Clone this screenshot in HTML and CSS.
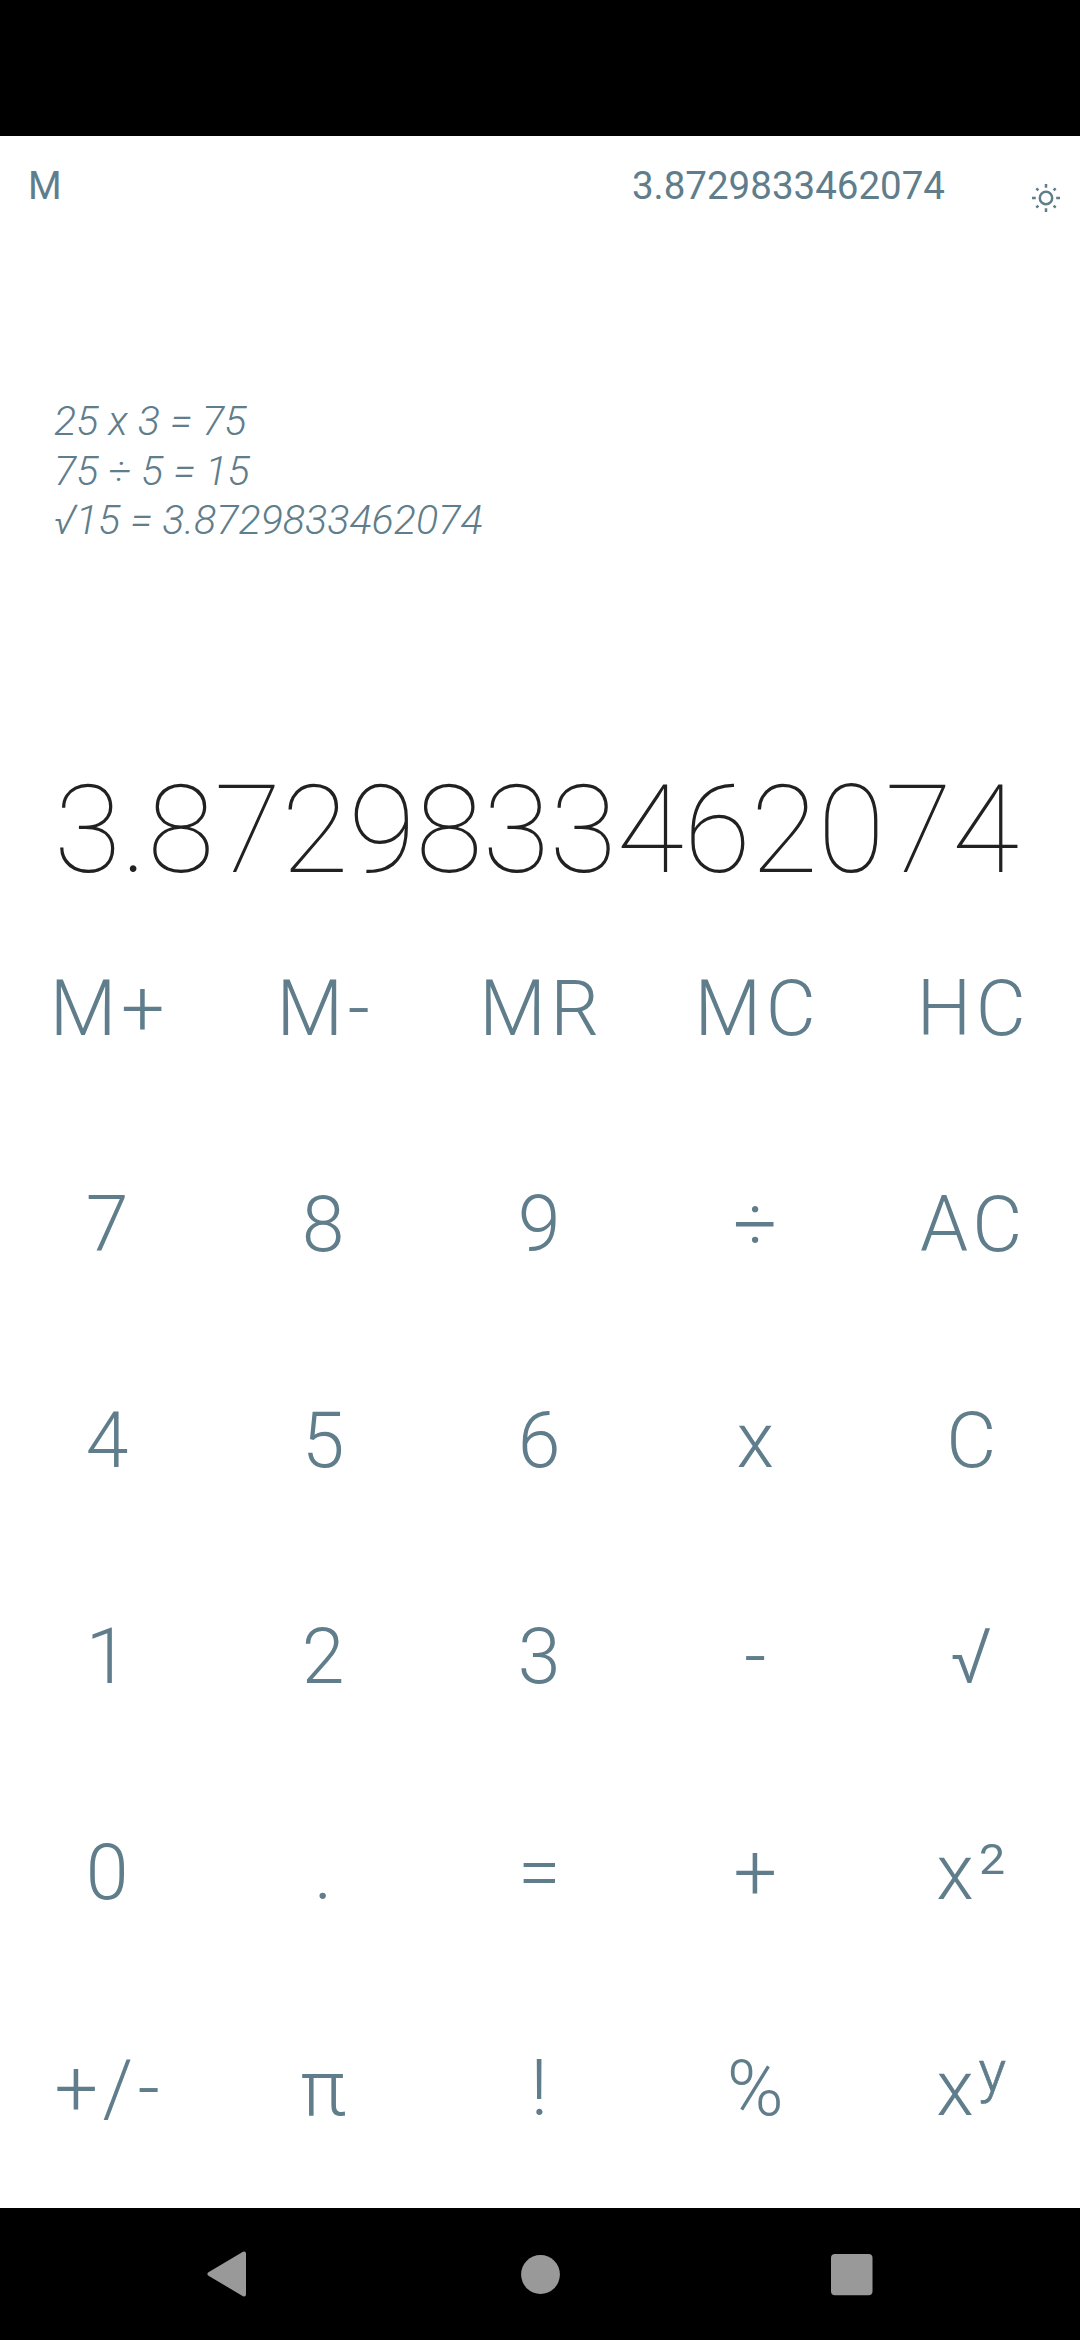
FILE: index.html
```html
<!DOCTYPE html>
<html lang="en">
<head>
<meta charset="utf-8">
<title>Calculator</title>
<link rel="stylesheet" href="styles.css">
</head>
<body>
<div class="status"></div>
<main class="app">
  <header class="top"><span>M</span><span class="memory">3.8729833462074</span>
    <svg class="sun" viewBox="0 0 28 28"><circle cx="14" cy="14" r="6.2"/><path d="M14 0v3.800M14 24.200v3.800M0 14h3.800M24.200 14h3.800M4.300 4.300l2.100 2.100M21.600 21.600l2.100 2.100M4.300 23.700l2.100-2.100M21.600 6.400l2.100-2.100"/></svg>
  </header>
  <div class="history"><div>25 x 3 = 75</div><div>75 ÷ 5 = 15</div><div>√15 = 3.8729833462074</div></div>
  <div class="result">3.8729833462074</div>
  <div class="keys">
    <div>M+</div><div>M-</div><div>MR</div><div>MC</div><div>HC</div>
    <div>7</div><div>8</div><div>9</div><div>÷</div><div>AC</div>
    <div>4</div><div>5</div><div>6</div><div>x</div><div>C</div>
    <div>1</div><div>2</div><div>3</div><div>-</div><div>√</div>
    <div>0</div><div>.</div><div>=</div><div>+</div><div>x²</div>
    <div>+/-</div><div>π</div><div>!</div><div>%</div><div>x<sup>y</sup></div>
  </div>
</main>
<nav class="nav">
  <svg viewBox="0 0 42 46"><path d="M37 2.500V43.500L2.500 23Z" stroke="#999" stroke-width="4" stroke-linejoin="round"/></svg>
  <svg viewBox="0 0 42 46"><circle cx="21.500" cy="23.500" r="19.400"/></svg>
  <svg viewBox="0 0 42 46"><rect y="3" width="41.500" height="41.300" rx="4"/></svg>
</nav>
</body>
</html>
```
FILE: styles.css
```css
body { margin: 0; width: 1080px; height: 2340px; display: flex; flex-direction: column; background: #fff; font-family: Roboto, sans-serif; color: #607d8b; }
.status { height: 136px; background: #000; }
.app { height: 2072px; display: flex; flex-direction: column; }
.app > * { flex-shrink: 0; }
.top { height: 96px; display: flex; padding: 27px 20px 0 28px; box-sizing: border-box; font-size: 38.5px; line-height: 46px; }
.memory { margin-left: auto; margin-right: 87px; }
.sun { width: 28px; height: 28px; margin-top: 21px; fill: none; stroke: #607d8b; stroke-width: 2.5; }
.history { height: 517px; padding: 165px 54px 0; box-sizing: border-box; font-size: 41.25px; line-height: 49.5px; font-weight: 300; font-style: italic; }
.result { height: 163px; box-sizing: border-box; padding: 0 54px; font-size: 122.5px; line-height: 162px; font-weight: 100; color: #212121; white-space: nowrap; }
.keys { display: grid; grid-template-columns: repeat(5, 216px); grid-auto-rows: 216px; width: 1080px; font-size: 77px; font-weight: 300; line-height: 194px; text-align: center; letter-spacing: 4.6px; }
.keys div { padding-left: 3px; }
.keys sup { font-size: 58px; line-height: 0; vertical-align: 24px; -webkit-text-stroke: 0.7px #607d8b; }
.nav { flex: 1; background: #000; display: flex; justify-content: center; align-items: center; gap: 270px; }
.nav svg { width: 42px; height: 46px; fill: #999; overflow: visible; }
```
